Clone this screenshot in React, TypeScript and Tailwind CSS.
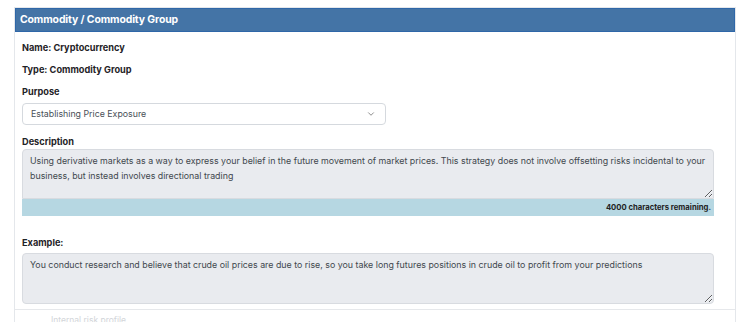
import React from 'react';
import { ChevronDown } from 'lucide-react';

const font = { fontFamily: 'Inter, "Liberation Sans", sans-serif' };

export default function App() {
  return (
    <div className="w-[750px] h-[322px] overflow-hidden bg-white pt-[7px] pl-[14px]" style={font}>
      <div className="w-[722px] border border-[#e4e7eb] border-b-0">
        {/* Header */}
        <div className="h-[24px] flex items-center px-[4px] bg-[#4474a6] border border-[#2f67a8] text-white text-[10.4px] font-bold tracking-[-0.1px]">
          Commodity / Commodity Group
        </div>

        <div className="px-[7px] pt-[5px] text-[#1f2327]">
          <div className="h-[22px] flex items-center text-[9.2px] font-bold">Name: Cryptocurrency</div>
          <div className="h-[22px] flex items-center text-[9.2px] font-bold">Type: Commodity Group</div>
          <div className="h-[22px] flex items-center text-[9.2px] font-bold">Purpose</div>

          <div className="w-[364px] h-[22px] flex items-center justify-between pl-[8px] pr-[9px] border border-[#d5d9de] rounded-[4px] text-[8.8px] text-[#495057]">
            <span>Establishing Price Exposure</span>
            <ChevronDown size={10} strokeWidth={1.6} className="text-[#555]" />
          </div>

          <div className="mt-[10px] h-[14px] flex items-center text-[9.2px] font-bold">Description</div>
          <textarea
            readOnly
            className="block w-[692px] h-[50px] bg-[#e9ebef] border border-[#d8dbe0] rounded-t-[4px] px-[7px] pt-[3px] text-[8.85px] leading-[15px] text-[#42484e] outline-none resize-y"
            value="Using derivative markets as a way to express your belief in the future movement of market prices. This strategy does not involve offsetting risks incidental to your business, but instead involves directional trading"
          />
          <div className="w-[692px] h-[17px] bg-[#b6d7e2] flex items-center justify-end pr-[3px] text-[7.7px] font-bold text-[#222]">
            4000 characters remaining.
          </div>

          <div className="mt-[20px] h-[14px] flex items-center text-[9.2px] font-bold">Example:</div>
          <textarea
            readOnly
            className="block mt-[3px] w-[692px] h-[51px] bg-[#e9ebef] border border-[#d8dbe0] rounded-[4px] px-[7px] pt-[3px] text-[8.85px] leading-[15px] text-[#42484e] outline-none resize-y"
            value="You conduct research and believe that crude oil prices are due to rise, so you take long futures positions in crude oil to profit from your predictions"
          />
        </div>

        <div className="mt-[5px] border-t border-[#e6e8eb] pt-[5px] px-[36px] text-[8.5px] leading-[10px] text-[#d2d5d9]">
          Internal risk profile
        </div>
      </div>
    </div>
  );
}
